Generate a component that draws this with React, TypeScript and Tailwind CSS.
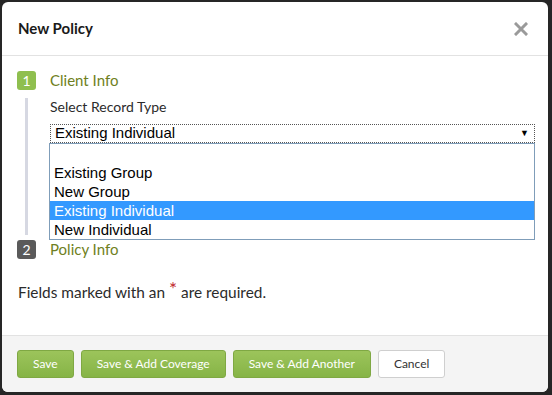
import React from "react";

const font = { fontFamily: "Lato, 'Open Sans', sans-serif" };

const StepBadge = ({ n, active }: { n: number; active: boolean }) => (
  <div
    className={
      "w-[19px] h-[19px] rounded-[3px] flex items-center justify-center text-white text-[14px] leading-none " +
      (active ? "bg-[#8fbf4f]" : "bg-[#5a5a5a]")
    }
  >
    {n}
  </div>
);

const options = ["", "Existing Group", "New Group", "Existing Individual", "New Individual"];

export default function App() {
  return (
    <div className="w-[552px] h-[395px] bg-[#262626] pt-[2px] pl-[2px]" style={font}>
      <div className="w-[546px] h-[390px] bg-white rounded-[6px] overflow-hidden flex flex-col">
        {/* header */}
        <div className="h-[54px] flex items-center justify-between pl-[16px] pr-[20px] border-b border-[#e2e2e2]">
          <h1 className="text-[15px] font-bold text-[#1a1a1a]">New Policy</h1>
          <svg width="14" height="14" viewBox="0 0 14 14">
            <path d="M2 2 L12 12 M12 2 L2 12" stroke="#9a9a9a" strokeWidth="3" strokeLinecap="square" />
          </svg>
        </div>

        {/* body */}
        <div className="flex-1 pl-[15px] pr-[13px] pt-[15px]">
          <div className="flex items-center gap-[14px] h-[19px]">
            <StepBadge n={1} active />
            <span className="text-[15px] text-[#6f7f22]">Client Info</span>
          </div>
          <div className="flex">
            <div className="w-[19px] flex justify-center pt-[8px] pb-[5px]">
              <div className="w-[3px] bg-[#d6d8e2]" />
            </div>
            <div className="flex-1 pl-[14px] pt-[8px]">
              <div className="text-[14px] text-[#2b2b2b] leading-[18px]">Select Record Type</div>
              <div
                className="mt-[8px] h-[19px] border border-dotted border-[#555] flex items-center justify-between px-[4px] text-[15px] text-black"
                style={{ fontFamily: "'Liberation Sans', Arial, sans-serif" }}
              >
                <span>Existing Individual</span>
                <span className="text-[9px] pr-[1px]">▼</span>
              </div>
              <div
                className="border border-[#7f9db9] -ml-[1px]"
                style={{ fontFamily: "'Liberation Sans', Arial, sans-serif" }}
              >
                {options.map((o, i) => (
                  <div
                    key={i}
                    className={
                      "h-[19px] leading-[19px] px-[4px] text-[15px] " +
                      (o === "Existing Individual" ? "bg-[#3399ff] text-white" : "text-black")
                    }
                  >
                    {o}
                  </div>
                ))}
              </div>
            </div>
          </div>
          <div className="flex items-center gap-[14px] h-[19px]">
            <StepBadge n={2} active={false} />
            <span className="text-[15px] text-[#6f7f22]">Policy Info</span>
          </div>
          <p className="mt-[22px] pl-[1px] text-[15.4px] text-[#2b2b2b]">
            Fields marked with an{" "}
            <span className="text-[#c0282d] text-[19px] leading-none relative top-[-2px]">*</span> are required.
          </p>
        </div>

        {/* footer */}
        <div className="h-[57px] bg-[#f4f4f4] border-t border-[#e2e2e2] flex items-center gap-[7px] pl-[15px]">
          {["Save", "Save & Add Coverage", "Save & Add Another"].map((t) => (
            <button
              key={t}
              className="h-[28px] px-[15px] rounded-[3px] border border-[#7fa843] bg-gradient-to-b from-[#9cc45b] to-[#86b446] text-white text-[12px]"
            >
              {t}
            </button>
          ))}
          <button className="h-[28px] px-[15px] rounded-[3px] border border-[#cfcfcf] bg-white text-[#333] text-[12px]">
            Cancel
          </button>
        </div>
      </div>
    </div>
  );
}
